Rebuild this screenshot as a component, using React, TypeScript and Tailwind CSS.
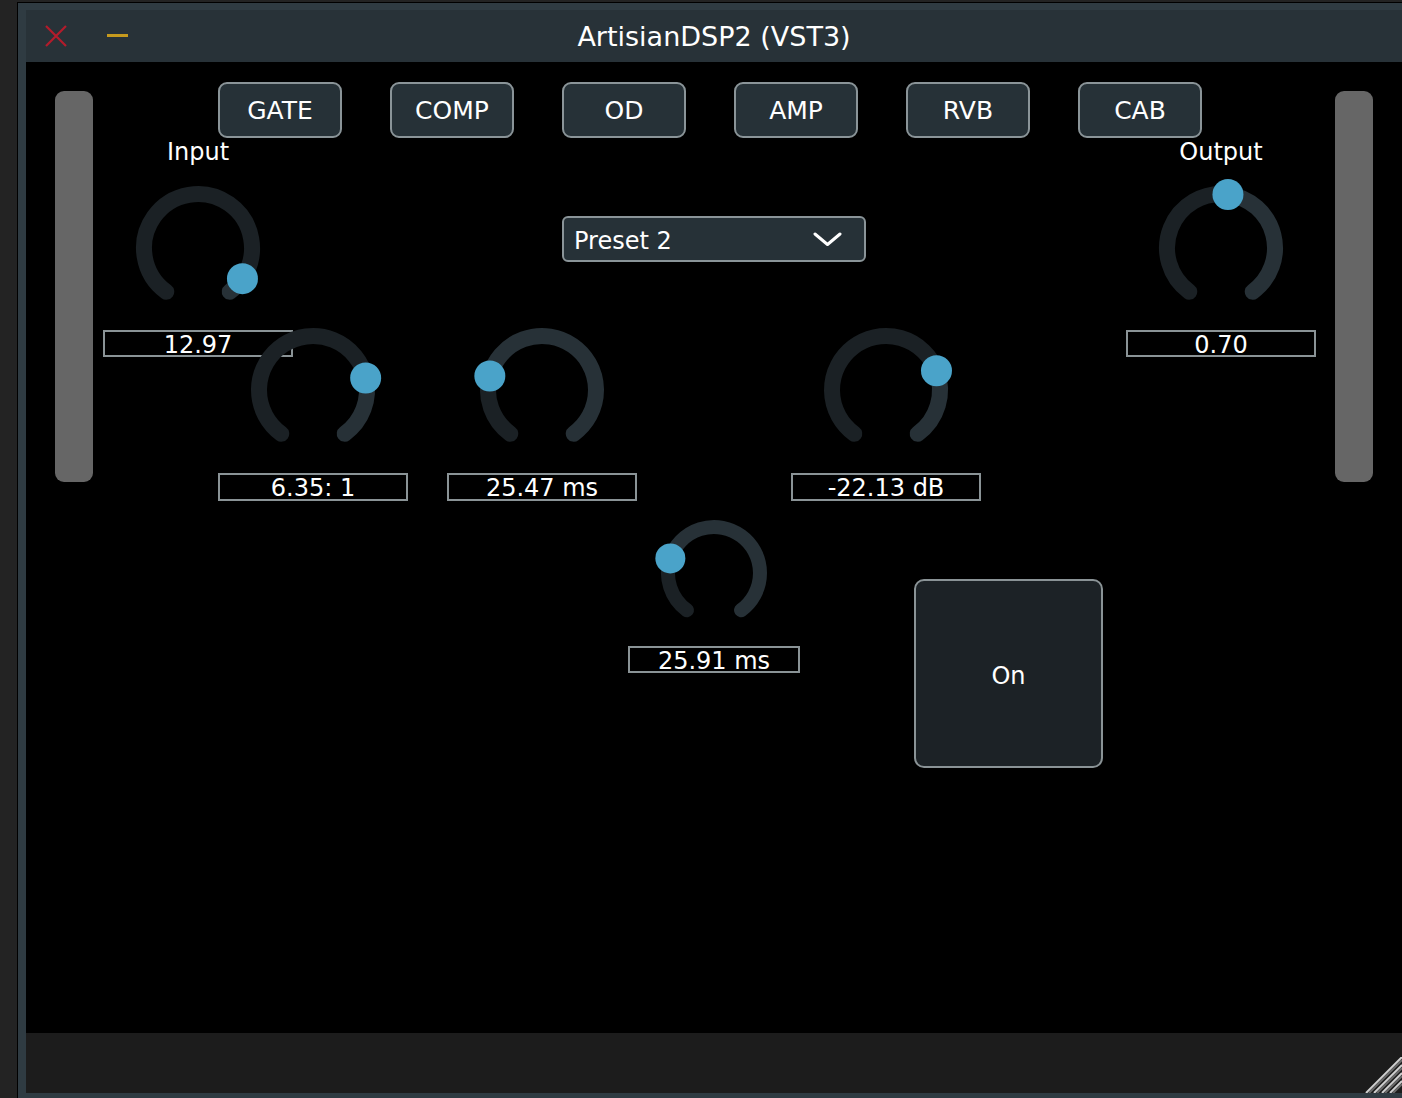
import React from "react";

const FONT = { fontFamily: '"DejaVu Sans", "Liberation Sans", sans-serif' };

const TABS = ["GATE", "COMP", "OD", "AMP", "RVB", "CAB"];

// angle in degrees, clockwise from 12 o'clock; knob travel is -144..144
function pt(c: number, r: number, a: number) {
  const rad = (a * Math.PI) / 180;
  return [c + r * Math.sin(rad), c - r * Math.cos(rad)];
}

function arc(c: number, r: number, from: number, to: number) {
  const [x1, y1] = pt(c, r, from);
  const [x2, y2] = pt(c, r, to);
  const large = to - from > 180 ? 1 : 0;
  return `M ${x1} ${y1} A ${r} ${r} 0 ${large} 1 ${x2} ${y2}`;
}

interface KnobProps {
  size: number;
  stroke: number;
  angle: number;
  thumb?: number;
}

function Knob({ size, stroke, angle, thumb = 15.5 }: KnobProps) {
  const c = size / 2;
  const r = (size - stroke) / 2;
  const [tx, ty] = pt(c, r, angle);
  return (
    <svg width={size} height={size} viewBox={`0 0 ${size} ${size}`} className="block overflow-visible">
      <path d={arc(c, r, angle, 144)} fill="none" stroke="#273137" strokeWidth={stroke} strokeLinecap="round" />
      <path d={arc(c, r, -144, angle)} fill="none" stroke="#1b2125" strokeWidth={stroke} strokeLinecap="round" />
      <circle cx={tx} cy={ty} r={thumb} fill="#4aa3c9" />
    </svg>
  );
}

function ValueBox({ text, w, h }: { text: string; w: string; h: string }) {
  return (
    <div className={`${w} ${h} flex items-center justify-center border-2 border-[#8a9396] bg-black pt-[2px] text-[24px] leading-none text-white`}>
      {text}
    </div>
  );
}

export default function App() {
  return (
    <div className="flex h-[1098px] w-[1402px] overflow-hidden bg-[#232323] pl-[17px] pt-[2px]" style={FONT}>
      <div className="flex flex-1 border-l border-t border-black">
        <div className="flex flex-1 flex-col border-b-[5px] border-l-[8px] border-t-[7px] border-[#2f3b42]">

          {/* ── Title bar ── */}
          <div className="grid h-[52px] grid-cols-[1fr_auto_1fr] items-center bg-[#283238]">
            <div className="flex items-center pl-[19px]">
              <svg width="22" height="22" viewBox="0 0 22 22">
                <path d="M1 1 L21 21 M21 1 L1 21" stroke="#b31c2b" strokeWidth="2.2" />
              </svg>
              <div className="ml-[40px] mt-[-1px] h-[3px] w-[21px] bg-[#c69a1e]" />
            </div>
            <div className="text-[27px] leading-none text-white">ArtisianDSP2 (VST3)</div>
            <div />
          </div>

          {/* ── Editor body ── */}
          <div className="flex h-[971px] bg-black">
            <div className="ml-[29px] mt-[29px] h-[391px] w-[38px] rounded-[9px] bg-[#666666]" />

            <div className="flex flex-1 flex-col">
              {/* Module tabs */}
              <div className="mt-[20px] flex gap-[48px] pl-[125px]">
                {TABS.map((t) => (
                  <div
                    key={t}
                    className="flex h-[56px] w-[124px] items-center justify-center rounded-[9px] border-2 border-[#8a9498] bg-[#263137] text-[25px] leading-none text-white"
                  >
                    {t}
                  </div>
                ))}
              </div>

              {/* Input / preset / output */}
              <div className="flex items-start">
                <div className="ml-[10px] flex w-[190px] flex-col items-center">
                  <div className="text-[24px] leading-[28px] text-white">Input</div>
                  <div className="mt-[20px]">
                    <Knob size={124} stroke={16} angle={124.6} />
                  </div>
                  <div className="mt-[20px]">
                    <ValueBox text="12.97" w="w-[190px]" h="h-[27px]" />
                  </div>
                </div>

                <div className="ml-[269px] mt-[78px] flex h-[46px] w-[304px] items-center justify-between rounded-[6px] border-2 border-[#8a9498] bg-[#263137] pl-[10px] pr-[22px]">
                  <span className="pt-[4px] text-[24px] leading-none text-white">Preset 2</span>
                  <svg width="29" height="15" viewBox="0 0 29 15">
                    <path d="M2 2 L14.5 12.5 L27 2" fill="none" stroke="white" strokeWidth="3" strokeLinecap="round" strokeLinejoin="round" />
                  </svg>
                </div>

                <div className="ml-[260px] flex w-[190px] flex-col items-center">
                  <div className="text-[24px] leading-[28px] text-white">Output</div>
                  <div className="mt-[20px]">
                    <Knob size={124} stroke={16} angle={7.4} />
                  </div>
                  <div className="mt-[20px]">
                    <ValueBox text="0.70" w="w-[190px]" h="h-[27px]" />
                  </div>
                </div>
              </div>

              {/* Compressor knobs */}
              <div className="mt-[-29px] flex items-start pl-[125px]">
                <div className="flex w-[190px] flex-col items-center">
                  <Knob size={124} stroke={16} angle={77.2} />
                  <div className="mt-[21px]">
                    <ValueBox text="6.35: 1" w="w-[190px]" h="h-[28px]" />
                  </div>
                </div>
                <div className="ml-[39px] flex w-[190px] flex-col items-center">
                  <Knob size={124} stroke={16} angle={-75} />
                  <div className="mt-[21px]">
                    <ValueBox text="25.47 ms" w="w-[190px]" h="h-[28px]" />
                  </div>
                </div>
                <div className="ml-[154px] flex w-[190px] flex-col items-center">
                  <Knob size={124} stroke={16} angle={69.2} />
                  <div className="mt-[21px]">
                    <ValueBox text="-22.13 dB" w="w-[190px]" h="h-[28px]" />
                  </div>
                </div>
              </div>

              {/* Release + bypass */}
              <div className="mt-[19px] flex items-start pl-[535px]">
                <div className="flex w-[172px] flex-col items-center">
                  <Knob size={106} stroke={14} angle={-71.6} thumb={15} />
                  <div className="mt-[20px]">
                    <ValueBox text="25.91 ms" w="w-[172px]" h="h-[27px]" />
                  </div>
                </div>
                <div className="ml-[114px] mt-[59px] flex h-[189px] w-[189px] items-center justify-center rounded-[10px] border-2 border-[#8a9396] bg-[#1c2226] pt-[4px] text-[24px] leading-none text-white">
                  On
                </div>
              </div>
            </div>

            <div className="mr-[29px] mt-[29px] h-[391px] w-[38px] rounded-[9px] bg-[#666666]" />
          </div>

          {/* ── Footer with resize grip ── */}
          <div className="flex flex-1 items-end justify-end bg-[#1c1c1c]">
            <svg width="38" height="36" viewBox="0 0 38 36" className="block">
              {[36, 28, 20, 12].map((k) => (
                <React.Fragment key={k}>
                  <line x1={38 - k} y1={36} x2={38} y2={36 - k} stroke="#d0d0d0" strokeWidth="2" />
                  <line x1={38 - k + 3} y1={36} x2={38} y2={36 - k + 3} stroke="#6a6a6a" strokeWidth="2" />
                </React.Fragment>
              ))}
            </svg>
          </div>

        </div>
      </div>
    </div>
  );
}
